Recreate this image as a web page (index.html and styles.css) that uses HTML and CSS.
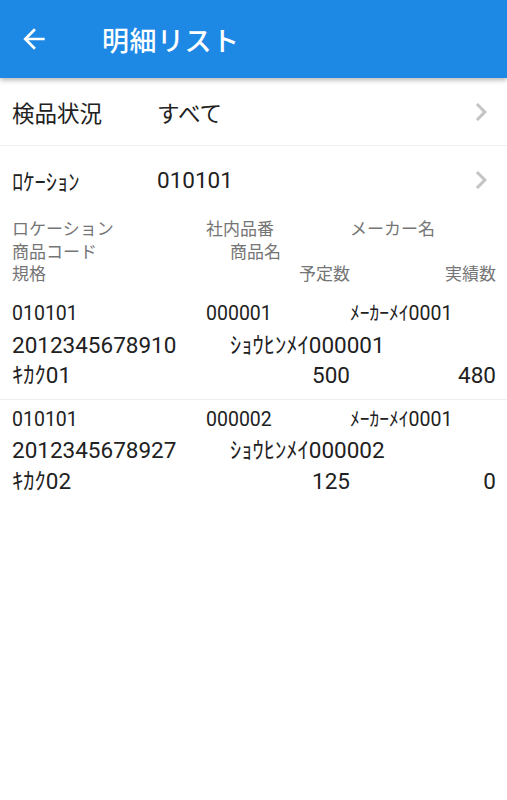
FILE: index.html
```html
<!DOCTYPE html>
<html lang="ja">

<head>
  <meta charset="UTF-8">
  <meta name="viewport" content="width=device-width, initial-scale=1.0">
  <title>明細リスト</title>
  <link rel="stylesheet" href="styles.css">
</head>

<body>

  <header class="app-bar">
    <svg class="back-icon" viewBox="0 0 24 24" width="32" height="32">
      <path d="M20 11H7.83l5.59-5.59L12 4l-8 8 8 8 1.41-1.41L7.83 13H20v-2z" fill="#fff" />
    </svg>
    <h1>明細リスト</h1>
  </header>

  <!-- Filters -->
  <div class="filter-row filter-status">
    <span class="filter-label">検品状況</span>
    <span class="filter-value">すべて</span>
    <svg class="chevron" viewBox="0 0 24 24" width="36" height="36">
      <path d="M10 6L8.59 7.41 13.17 12l-4.58 4.59L10 18l6-6z" fill="#c4c4c4" />
    </svg>
  </div>

  <div class="filter-row">
    <span class="filter-label">ﾛｹｰｼｮﾝ</span>
    <span class="filter-value">010101</span>
    <svg class="chevron" viewBox="0 0 24 24" width="36" height="36">
      <path d="M10 6L8.59 7.41 13.17 12l-4.58 4.59L10 18l6-6z" fill="#c4c4c4" />
    </svg>
  </div>

  <!-- Column headings -->
  <div class="list-head">
    <div class="line-top">
      <span>ロケーション</span>
      <span>社内品番</span>
      <span>メーカー名</span>
    </div>
    <div class="line-mid">
      <span>商品コード</span>
      <span>商品名</span>
    </div>
    <div class="line-bottom">
      <span>規格</span>
      <span class="num">予定数</span>
      <span class="num">実績数</span>
    </div>
  </div>

  <!-- Items -->
  <div class="item">
    <div class="line-top">
      <span>010101</span>
      <span>000001</span>
      <span>ﾒｰｶｰﾒｲ0001</span>
    </div>
    <div class="line-mid">
      <span>2012345678910</span>
      <span>ｼｮｳﾋﾝﾒｲ000001</span>
    </div>
    <div class="line-bottom">
      <span>ｷｶｸ01</span>
      <span class="num">500</span>
      <span class="num">480</span>
    </div>
  </div>

  <div class="item">
    <div class="line-top">
      <span>010101</span>
      <span>000002</span>
      <span>ﾒｰｶｰﾒｲ0001</span>
    </div>
    <div class="line-mid">
      <span>2012345678927</span>
      <span>ｼｮｳﾋﾝﾒｲ000002</span>
    </div>
    <div class="line-bottom">
      <span>ｷｶｸ02</span>
      <span class="num">125</span>
      <span class="num">0</span>
    </div>
  </div>

</body>

</html>
```

FILE: styles.css
```css
body {
  margin: 0;
  font-family: Roboto, "Noto Sans CJK JP", sans-serif;
  background: #fff;
  color: #212121;
}

/* App bar */
.app-bar {
  height: 78px;
  background: #1e88e5;
  display: flex;
  align-items: center;
  padding-left: 18px;
  box-shadow: 0 2px 5px rgba(0, 0, 0, 0.3);
}

.back-icon {
  display: block;
}

.app-bar h1 {
  margin: 0 0 0 52px;
  font-size: 27px;
  font-weight: 500;
  color: #fff;
  letter-spacing: 0.5px;
}

/* Filters */
.filter-row {
  height: 67px;
  display: flex;
  align-items: center;
  padding: 0 8px 0 12px;
  font-size: 22.5px;
}

.filter-status {
  border-bottom: 1px solid #eeeeee;
}

.filter-label {
  width: 145px;
}

.filter-value {
  flex: 1;
}

.chevron {
  display: block;
}

/* List */
.list-head,
.item {
  padding: 0 11px 0 12px;
}

.list-head {
  padding-top: 5px;
  padding-bottom: 9px;
  font-size: 17px;
  line-height: 22.5px;
  color: #757575;
}

.line-top {
  display: grid;
  grid-template-columns: 194px 144px 1fr;
}

.line-mid {
  display: grid;
  grid-template-columns: 218px 1fr;
}

.line-bottom {
  display: grid;
  grid-template-columns: 1fr 100px 146px;
}

.num {
  text-align: right;
}

.item {
  padding-top: 4.5px;
  padding-bottom: 8.5px;
  line-height: 30.5px;
  font-size: 22.5px;
  border-bottom: 1px solid #eeeeee;
}

.item:last-child {
  border-bottom: none;
}

.item .line-top {
  font-size: 19.5px;
}
```
